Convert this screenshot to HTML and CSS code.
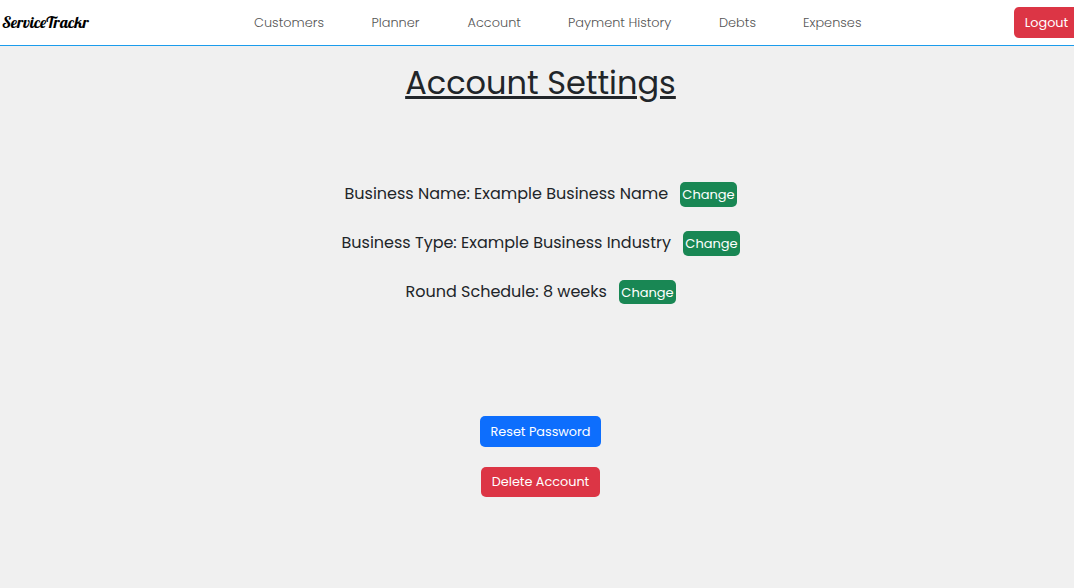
FILE: index.html
```html
<!DOCTYPE html>
<html lang="en">
<head>
<meta charset="utf-8">
<title>ServiceTrackr</title>
<link rel="stylesheet" href="styles.css">
</head>
<body>
<header class="navbar">
  <a class="brand">ServiceTrackr</a>
  <nav class="links">
    <a class="customers">Customers</a>
    <a class="planner">Planner</a>
    <a class="account">Account</a>
    <a class="history">Payment History</a>
    <a class="debts">Debts</a>
    <a class="expenses">Expenses</a>
  </nav>
  <button class="btn danger logout">Logout</button>
</header>
<main class="settings">
  <h1 class="title">Account Settings</h1>
  <section class="details">
    <div class="row"><span class="name">Business Name: Example Business Name</span><button class="change">Change</button></div>
    <div class="row"><span class="type">Business Type: Example Business Industry</span><button class="change">Change</button></div>
    <div class="row"><span class="schedule">Round Schedule: 8 weeks</span><button class="change short">Change</button></div>
  </section>
  <section class="actions">
    <button class="btn primary reset">Reset Password</button>
    <button class="btn danger delete">Delete Account</button>
  </section>
</main>
</body>
</html>
```
FILE: styles.css
```css
* { box-sizing: border-box; }
body {
  margin: 0;
  height: 588px;
  overflow: hidden;
  background: #f0f0f0;
  color: #212529;
  font-family: Poppins, Inter, sans-serif;
  white-space: nowrap;
}
button {
  border: 0;
  padding: 0;
  color: #fff;
  font-family: inherit;
  font-size: 12.8px;
  font-weight: 400;
}
.navbar {
  display: flex;
  height: 46px;
  background: #fff;
  border-bottom: 1px solid #1b9cec;
}
.brand {
  flex: none;
  width: 254px;
  padding-left: 2px;
  color: #000;
  font: 16px/44px Lobster, "Liberation Serif", serif;
}
.links {
  display: flex;
  flex: none;
  gap: 47px;
  width: 760px;
  color: #555;
  font-size: 12.9px;
  font-weight: 300;
  line-height: 45px;
}
.customers { width: 70.5px; }
.planner { width: 49px; }
.account { width: 53.5px; }
.history { width: 104px; }
.debts { width: 37px; }
.btn { border-radius: 5px; height: 31px; }
.danger { background: #dc3545; }
.primary { background: #0d6efd; }
.logout { flex: none; width: 65px; margin-top: 7px; }
.settings { width: 1081px; display: flex; flex-direction: column; align-items: center; }
.title {
  margin: 17px 0 0;
  height: 119px;
  font-size: 32px;
  font-weight: 400;
  line-height: 40px;
  text-decoration: underline;
  text-decoration-thickness: 3px;
}
.details { display: flex; flex-direction: column; align-items: center; gap: 24px; }
.row { display: flex; gap: 12px; height: 25px; font-size: 16px; font-weight: 400; line-height: 24px; }
.name, .type, .schedule { padding-left: 0.5px; }
.name { width: 324px; }
.type { width: 330px; }
.schedule { width: 202px; }
.change { width: 57px; height: 25px; border-radius: 5px; background: #198754; font-size: 13px; }
.short { height: 24px; padding-top: 1px; }
.actions { display: flex; flex-direction: column; align-items: center; gap: 20px; margin-top: 111px; }
.reset { width: 121px; }
.delete { width: 119px; height: 30px; }
```
